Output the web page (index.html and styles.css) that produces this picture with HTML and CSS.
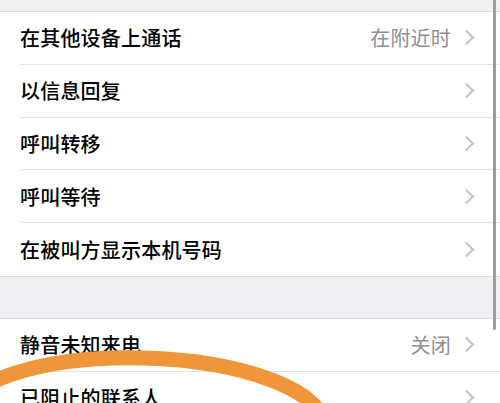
FILE: index.html
```html
<!DOCTYPE html>
<html lang="zh">
<head>
<meta charset="utf-8">
<link rel="stylesheet" href="styles.css">
</head>
<body>
<div class="screen">
  <div class="band-top"></div>
  <div class="group">
    <div class="row"><span class="label">在其他设备上通话</span><span class="value">在附近时</span><span class="chev"></span></div>
    <div class="row"><span class="label">以信息回复</span><span class="chev"></span></div>
    <div class="row"><span class="label">呼叫转移</span><span class="chev"></span></div>
    <div class="row"><span class="label">呼叫等待</span><span class="chev"></span></div>
    <div class="row last"><span class="label">在被叫方显示本机号码</span><span class="chev"></span></div>
  </div>
  <div class="band-gap"></div>
  <div class="group">
    <div class="row"><span class="label">静音未知来电</span><span class="value">关闭</span><span class="chev"></span></div>
    <div class="row"><span class="label">已阻止的联系人</span><span class="chev"></span></div>
  </div>
  <div class="scrollbar"></div>
  <svg class="circle" width="500" height="403" viewBox="0 0 500 403">
    <ellipse cx="142" cy="422" rx="182" ry="64" fill="none" stroke="#f0963a" stroke-width="15" transform="rotate(1.5 142 422)"/>
  </svg>
</div>
</body>
</html>
```
FILE: styles.css
```css
html, body {
  margin: 0;
  padding: 0;
  background: #ffffff;
}
.screen {
  position: relative;
  width: 500px;
  height: 403px;
  overflow: hidden;
  background: #efeff4;
  font-family: "Noto Sans CJK SC", "Noto Sans", sans-serif;
}
.band-top {
  height: 11px;
  border-bottom: 1px solid #dcdce0;
}
.group {
  background: #ffffff;
  padding-left: 20px;
}
.row {
  box-sizing: border-box;
  height: 52.8px;
  display: flex;
  align-items: center;
  padding-right: 26px;
  border-bottom: 1px solid #e3e3e6;
}
.row.last {
  border-bottom: none;
}
.label {
  flex: 1;
  font-size: 20px;
  font-weight: 500;
  color: #000000;
  letter-spacing: 0.2px;
}
.value {
  font-size: 20px;
  color: #8e8e93;
  margin-right: 10px;
  letter-spacing: 0.2px;
}
.chev {
  width: 9px;
  height: 9px;
  border-top: 2.5px solid #c4c4c8;
  border-right: 2.5px solid #c4c4c8;
  transform: rotate(45deg);
  margin-right: 2px;
}
.band-gap {
  height: 41px;
  border-top: 1px solid #dcdce0;
  border-bottom: 1px solid #dcdce0;
}
.scrollbar {
  position: absolute;
  left: 493px;
  top: 0;
  width: 3px;
  height: 330px;
  background: #9d9d9f;
  border-radius: 0 0 2px 2px;
}
.circle {
  position: absolute;
  left: 0;
  top: 0;
}
```
